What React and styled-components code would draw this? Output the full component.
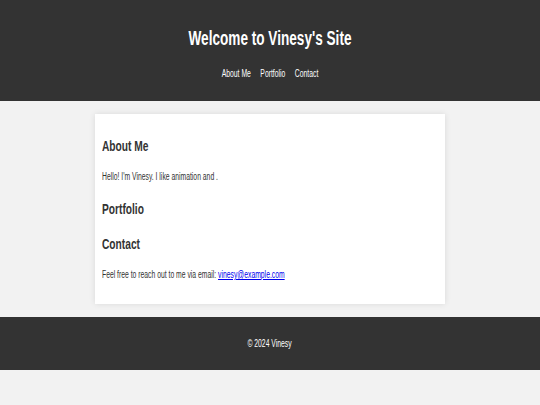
import React from 'react';
import styled, { createGlobalStyle } from 'styled-components';

const GlobalStyle = createGlobalStyle`
   html, body {
      margin: 0;
      padding: 0;
      background: #f2f2f2;
      font-family: "Liberation Sans", Arial, sans-serif;
      color: #333;
   }
`;

const App = () => {
   return (
      <Page>
         <GlobalStyle />
         <Header>
            <Title>Welcome to Vinesy's Site</Title>
            <Nav>
               <NavLink href="#about">About Me</NavLink>
               <NavLink href="#portfolio">Portfolio</NavLink>
               <NavLink href="#contact">Contact</NavLink>
            </Nav>
         </Header>
         <Main>
            <Card>
               <Section id="about">
                  <H2>About Me</H2>
                  <P>Hello! I'm Vinesy. I like animation and .</P>
               </Section>
               <Section id="portfolio">
                  <H2>Portfolio</H2>
               </Section>
               <Section id="contact">
                  <H2>Contact</H2>
                  <P>Feel free to reach out to me via email: <Mail href="mailto:vinesy@example.com">vinesy@example.com</Mail></P>
               </Section>
            </Card>
         </Main>
         <Footer>
            <FootText>© 2024 Vinesy</FootText>
         </Footer>
      </Page>
   )
}
export default App;

const Page = styled.div `
   width: 540px;
   min-height: 405px;
`;
const Header = styled.header `
   background: #333;
   color: #fff;
   text-align: center;
   padding: 27px 0 21px;
`;
const Title = styled.h1 `
   margin: 0;
   font-size: 20px;
   line-height: 22px;
   font-weight: bold;
   transform: scaleX(0.68);
`;
const Nav = styled.nav `
   margin-top: 19px;
   line-height: 12px;
   font-size: 10px;
   transform: scaleX(0.68);
`;
const NavLink = styled.a `
   color: #fff;
   text-decoration: none;
   margin: 0 7px;
`;
const Main = styled.main `
   padding: 13px 95px;
`;
const Card = styled.div `
   background: #fff;
   padding: 6px 7px 7px;
   box-shadow: 0 0 6px rgba(0, 0, 0, 0.1);
   overflow: hidden;
`;
const Section = styled.section `
   display: block;
`;
const H2 = styled.h2 `
   margin: 17px 0 16px;
   font-size: 15px;
   line-height: 18px;
   font-weight: bold;
   color: #333;
   transform: scaleX(0.68);
   transform-origin: left center;
`;
const P = styled.p `
   margin: 16px 0;
   font-size: 10px;
   line-height: 12px;
   color: #333;
   transform: scaleX(0.68);
   transform-origin: left center;
`;
const Mail = styled.a `
   color: #0000ee;
   text-decoration: underline;
`;
const Footer = styled.footer `
   background: #333;
   color: #fff;
   text-align: center;
   height: 53px;
   display: flex;
   align-items: center;
   justify-content: center;
`;
const FootText = styled.p `
   margin: 0;
   font-size: 10px;
   line-height: 12px;
   transform: scaleX(0.68);
`;
